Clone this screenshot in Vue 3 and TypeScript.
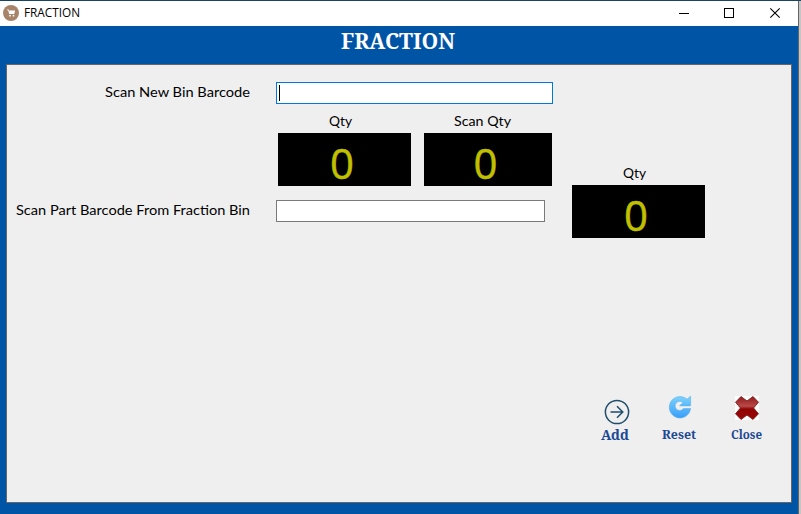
<script setup lang="ts">
import { ref } from 'vue'

const bin = ref('')
const part = ref('')
const binQty = ref(0)
const scanQty = ref(0)
const partQty = ref(0)

function reset(): void {
  bin.value = ''
  part.value = ''
  binQty.value = scanQty.value = partQty.value = 0
}
</script>

<template>
  <div class="screen">
    <div class="window">
      <header class="titlebar">
        <svg class="logo" width="16" height="16" viewBox="0 0 16 16">
          <circle cx="8" cy="8" r="8" fill="#a68369" />
          <path d="M4 4.5h1.6l.5 1h6L11.3 9H6.1L5.2 5.3H4z" fill="#fff" />
          <circle cx="7" cy="10.7" r=".9" fill="#fff" />
          <circle cx="10.5" cy="10.7" r=".9" fill="#fff" />
        </svg>
        <svg class="caption" width="56" height="18"><text x="0" y="13" textLength="56" lengthAdjust="spacingAndGlyphs">FRACTION</text></svg>
        <div class="controls">
          <svg width="10" height="10" shape-rendering="crispEdges"><path d="M0 5.5h10" stroke="#000" /></svg>
          <svg width="10" height="10" shape-rendering="crispEdges"><rect x=".5" y=".5" width="9" height="9" fill="none" stroke="#000" /></svg>
          <svg width="10" height="10"><path d="M.3.3l9.4 9.4M9.7.3L.3 9.7" stroke="#000" stroke-width="1.1" /></svg>
        </div>
      </header>
      <h1 class="heading"><svg width="114" height="30"><text x="0" y="23" textLength="114" lengthAdjust="spacingAndGlyphs">FRACTION</text></svg></h1>
      <main class="panel">
        <section class="form">
          <div class="row first">
            <label class="label"><svg width="145" height="22"><text x="0" y="15" textLength="145" lengthAdjust="spacingAndGlyphs">Scan New Bin Barcode</text></svg></label>
            <div class="field active"><span class="caret"></span>{{ bin }}</div>
          </div>
          <div class="counters">
            <div class="counter">
              <svg class="qty" width="24" height="22"><text x="0" y="15" textLength="23" lengthAdjust="spacingAndGlyphs">Qty</text></svg>
              <div class="display"><span>{{ binQty }}</span></div>
            </div>
            <div class="counter scan">
              <svg class="qty" width="58" height="22"><text x="0" y="15" textLength="57" lengthAdjust="spacingAndGlyphs">Scan Qty</text></svg>
              <div class="display"><span>{{ scanQty }}</span></div>
            </div>
          </div>
          <div class="row second">
            <label class="label"><svg width="234" height="22"><text x="0" y="15" textLength="234" lengthAdjust="spacingAndGlyphs">Scan Part Barcode From Fraction Bin</text></svg></label>
            <div class="field">{{ part }}</div>
          </div>
        </section>
        <aside class="side">
          <div class="counter">
            <svg class="qty" width="24" height="22"><text x="0" y="15" textLength="23" lengthAdjust="spacingAndGlyphs">Qty</text></svg>
            <div class="display"><span>{{ partQty }}</span></div>
          </div>
        </aside>
        <footer class="actions">
          <button class="action add">
            <svg class="arrow" width="26" height="26" viewBox="0 0 26 26" fill="none" stroke="#1d4e6b" stroke-width="1.5"><circle cx="13" cy="13" r="11.6" /><path d="M6.5 13h12M13 7.2l5.8 5.8-5.8 5.8" /></svg>
            <svg class="name" width="29" height="18"><text x="0" y="14" textLength="28" lengthAdjust="spacingAndGlyphs">Add</text></svg>
          </button>
          <button class="action reset" @click="reset">
            <svg width="24" height="24" viewBox="0 0 24 24">
              <defs><linearGradient id="sky" x2="0" y2="1"><stop stop-color="#7cd3fc" /><stop offset="1" stop-color="#3a9ef8" /></linearGradient></defs>
              <path d="M22.6 1.2V10H12.4L15 7.7A4.6 4.6 0 1 0 15.4 13.6H22.6A10.7 10.7 0 1 1 19 4.2z" fill="url(#sky)" stroke="#58aee9" stroke-width=".6" />
              <path d="M11.6 10.6H22.6" stroke="#58b8f6" stroke-width="1.2" />
            </svg>
            <svg class="name" width="35" height="18"><text x="0" y="14" textLength="34" lengthAdjust="spacingAndGlyphs">Reset</text></svg>
          </button>
          <button class="action close">
            <svg width="24" height="24" viewBox="0 0 24 24">
              <defs><linearGradient id="ruby" x2="0" y2="1"><stop stop-color="#921b1b" /><stop offset=".42" stop-color="#b84a48" /><stop offset=".54" stop-color="#8f0505" /><stop offset="1" stop-color="#9c0808" /></linearGradient></defs>
              <path d="M0 0h24v24H0z" fill="#fff" />
              <path d="M6 .5L12 4.9 18 .5 23.5 6.2 18.6 12l4.9 5.8-5.5 5.7-6-4.4-6 4.4L.5 17.8 5.4 12 .5 6.2z" fill="url(#ruby)" stroke="#741414" stroke-width=".8" stroke-linejoin="round" />
            </svg>
            <svg class="name" width="32" height="18"><text x="0" y="14" textLength="31" lengthAdjust="spacingAndGlyphs">Close</text></svg>
          </button>
        </footer>
      </main>
    </div>
  </div>
</template>

<style>
body { overflow: hidden; }
</style>

<style scoped>
* { box-sizing: border-box; }
svg { display: block; flex: none; overflow: visible; }
.screen { width: 801px; height: 514px; background: #c5c5c5; border-top: 1px solid #174467; font-family: Lato, "Liberation Sans", sans-serif; }
.window { width: 799px; height: 513px; background: #0054a6; border-right: 1px solid #666; display: flex; flex-direction: column; }
.titlebar { height: 25px; flex: none; background: #fff; display: flex; align-items: center; padding: 0 18px 1px 3px; }
.caption { margin-left: 5px; font: 12px "Open Sans", sans-serif; }
.controls { margin-left: auto; display: flex; gap: 35px; }
.controls svg:nth-child(2) { margin-right: 1px; }
.heading { margin: 0; height: 38px; flex: none; display: flex; justify-content: center; padding-right: 2px; font: bold 22px "Noto Serif", "DejaVu Serif", serif; }
.heading text { fill: #fff; }
.panel { width: 786px; height: 439px; margin-left: 6px; border: 1px solid #666; background: #efefef; display: grid; grid-template: 321px 1fr / 565px 1fr; }
.form { padding-top: 17px; }
.row { display: flex; height: 22px; }
.label { width: 243px; margin-right: 26px; display: flex; justify-content: flex-end; font-size: 14px; }
.field { width: 269px; height: 22px; border: 1px solid #7a7a7a; background: #fff; padding: 2px; }
.field.active { width: 277px; border-color: #0078d7; }
.caret { display: block; width: 1px; height: 16px; background: #000; }
.counters { display: flex; gap: 13px; margin: 7px 0 14px 271px; }
.counter { width: 133px; }
.counter.scan { width: 128px; }
.qty { margin: 0 auto; font-size: 14px; transform: translateX(-4px); }
.scan .qty { transform: translateX(-5px); }
.display { height: 53px; background: #000; color: #c0c000; font: 42px/59px "Open Sans", sans-serif; text-align: center; padding-right: 5px; }
.display span { -webkit-text-stroke: .5px #c0c000; }
.side { padding-top: 98px; }
.actions { grid-column: 1 / -1; display: flex; padding-left: 593px; }
.action { border: 0; padding: 0; background: none; display: flex; flex-direction: column; align-items: center; color: #1b4893; font: bold 12px "Noto Serif", "DejaVu Serif", serif; }
.action text { fill: #1b4893; }
.add { width: 31px; padding-top: 13px; font-size: 14px; }
.arrow { margin-left: 2px; }
.add .name { margin-top: 1px; }
.reset { width: 35px; margin-left: 31px; padding-top: 9px; }
.close { width: 32px; margin-left: 34px; padding-top: 10px; }
.reset .name { margin-top: 6px; }
.close .name { margin-top: 5px; }
</style>
